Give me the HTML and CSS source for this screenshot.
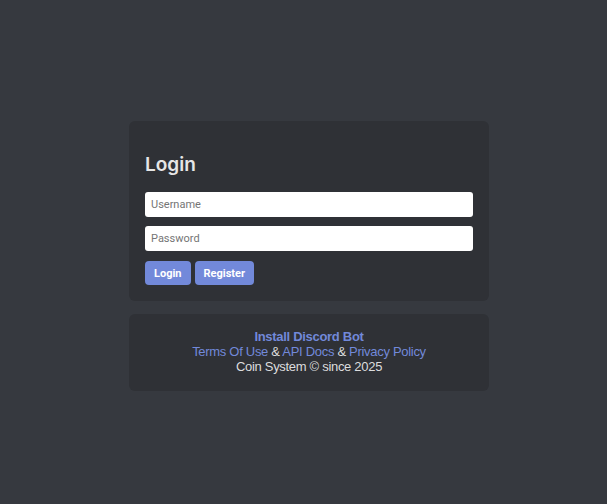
FILE: index.html
```html
<!DOCTYPE html>
<html lang="en">
<head>
    <meta charset="UTF-8">
    <meta name="viewport" content="width=device-width, initial-scale=1.0">
    <title>Coin System - Login</title>
    <link rel="stylesheet" href="styles.css">
</head>
<body>
    <div class="page">
        <div class="card login-card">
            <h2 class="card-title">Login</h2>
            <input class="field" type="text" placeholder="Username">
            <input class="field" type="password" placeholder="Password">
            <div class="actions">
                <button class="btn">Login</button>
                <button class="btn">Register</button>
            </div>
        </div>
        <div class="card footer-card">
            <a class="bot-link" href="#">Install Discord Bot</a>
            <div><a href="#">Terms Of Use</a> &amp; <a href="#">API Docs</a> &amp; <a href="#">Privacy Policy</a></div>
            <div>Coin System &copy; since 2025</div>
        </div>
    </div>
</body>
</html>
```

FILE: styles.css
```css
body {
    margin: 0;
    background-color: #36393f;
    font-family: 'Liberation Sans', Arial, sans-serif;
    color: #dcddde;
}

.page {
    width: 360px;
    margin: 121px 0 0 129px;
    display: flex;
    flex-direction: column;
    gap: 13px;
}

.card {
    background-color: #2f3136;
    border-radius: 6px;
    padding: 16px;
}

.login-card {
    display: flex;
    flex-direction: column;
}

.card-title {
    font-family: 'Inter', sans-serif;
    font-size: 19px;
    font-weight: 600;
    color: #e6e6e6;
    line-height: 24px;
    margin: 16px 0 15px 0;
}

.field {
    height: 25px;
    box-sizing: border-box;
    border: none;
    border-radius: 3px;
    padding: 0 6px;
    margin-bottom: 9px;
    font-family: 'Roboto', sans-serif;
    font-size: 11px;
    background: #fff;
    color: #333;
}

.field + .field {
    margin-bottom: 10px;
}

.field::placeholder {
    color: #757575;
}

.actions {
    display: flex;
    gap: 4px;
}

.btn {
    height: 24px;
    padding: 0 9px;
    border: none;
    border-radius: 4px;
    background-color: #7289da;
    color: #fff;
    font-family: 'Roboto', sans-serif;
    font-weight: bold;
    font-size: 11px;
    cursor: pointer;
}

.footer-card {
    padding: 15px 16px 17px;
    text-align: center;
    font-size: 13px;
    letter-spacing: -0.3px;
    line-height: 15px;
}

.footer-card a {
    color: #7289da;
    text-decoration: none;
}

.footer-card .bot-link {
    font-weight: bold;
}
```
